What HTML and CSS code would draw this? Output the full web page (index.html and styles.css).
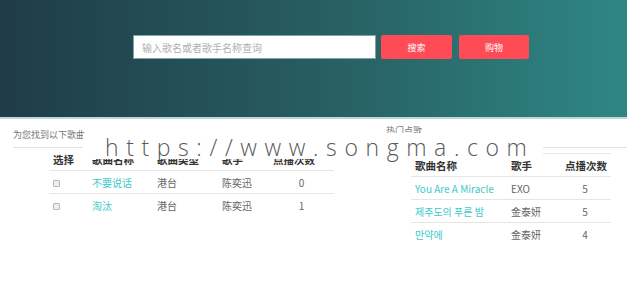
FILE: index.html
```html
<!doctype html>
<html lang="zh-CN">
  <head>
    <meta charset="UTF-8" />
    <meta name="viewport" content="width=device-width, initial-scale=1.0" />
    <title>点歌</title>
    <link rel="stylesheet" href="styles.css">
  </head>
  <body>
    <header class="banner">
      <form class="search-bar" onsubmit="return false">
        <input class="search-input" type="text" placeholder="输入歌名或者歌手名称查询" />
        <button class="btn" type="submit">搜索</button>
        <button class="btn btn-cart" type="button">购物</button>
      </form>
    </header>

    <main class="content">
      <section class="panel panel-result">
        <h2 class="panel-title">为您找到以下歌曲</h2>
        <hr class="panel-rule" />
        <table class="song-table result-table">
          <thead>
            <tr>
              <th class="col-check">选择</th>
              <th class="col-name">歌曲名称</th>
              <th class="col-type">歌曲类型</th>
              <th class="col-singer">歌手</th>
              <th class="col-count">点播次数</th>
            </tr>
          </thead>
          <tbody>
            <tr>
              <td><input class="check" type="checkbox" /></td>
              <td><a href="#">不要说话</a></td>
              <td>港台</td>
              <td>陈奕迅</td>
              <td class="num">0</td>
            </tr>
            <tr>
              <td><input class="check" type="checkbox" /></td>
              <td><a href="#">淘汰</a></td>
              <td>港台</td>
              <td>陈奕迅</td>
              <td class="num">1</td>
            </tr>
          </tbody>
        </table>
      </section>

      <section class="panel panel-hot">
        <h2 class="panel-title">热门点歌</h2>
        <hr class="panel-rule" />
        <table class="song-table hot-table">
          <thead>
            <tr>
              <th class="col-name">歌曲名称</th>
              <th class="col-singer">歌手</th>
              <th class="col-count">点播次数</th>
            </tr>
          </thead>
          <tbody>
            <tr>
              <td><a href="#">You Are A Miracle</a></td>
              <td>EXO</td>
              <td class="num">5</td>
            </tr>
            <tr>
              <td><a href="#">제주도의 푸른 밤</a></td>
              <td>金泰妍</td>
              <td class="num">5</td>
            </tr>
            <tr>
              <td><a href="#">만약에</a></td>
              <td>金泰妍</td>
              <td class="num">4</td>
            </tr>
          </tbody>
        </table>
      </section>

      <div class="watermark">https://www.songma.com</div>
    </main>
  </body>
</html>
```

FILE: styles.css
```css
body {
  margin: 0;
  padding: 0;
  font-family: "Noto Sans CJK SC", "Noto Sans", sans-serif;
  color: #555;
  background: #fff;
  overflow: hidden;
}

.banner {
  height: 117px;
  background: linear-gradient(90deg, #1f3c47 0%, #275d61 50%, #2e8784 100%);
  border-bottom: 2px solid #bcd6da;
  display: flex;
  justify-content: flex-start;
}

.search-bar {
  display: flex;
  margin: 35px 0 0 133px;
  height: 24px;
}

.search-input {
  box-sizing: border-box;
  width: 243px;
  height: 24px;
  border: 1px solid #7fa3a7;
  padding: 0 8px;
  font-family: inherit;
  font-size: 10px;
  color: #555;
  outline: none;
}

.search-input::placeholder {
  color: #b0b0b0;
}

.btn {
  width: 71px;
  height: 24px;
  margin-left: 5px;
  border: none;
  border-radius: 2px;
  background: #ff4b55;
  color: #fff;
  font-family: inherit;
  font-size: 9px;
  cursor: pointer;
}

.btn-cart {
  width: 70px;
  margin-left: 7px;
}

.content {
  position: relative;
  display: flex;
}

.panel-title {
  margin: 0;
  font-size: 9px;
  font-weight: normal;
  color: #777;
  line-height: 12px;
}

.panel-rule {
  border: none;
  border-top: 1px solid #e2e2e2;
  margin: 0;
}

.panel-result {
  width: 340px;
  padding: 10px 0 0 13px;
}

.panel-result .panel-rule {
  margin-top: 6px;
}

.panel-hot {
  flex: 1;
  padding: 6px 0 0 33px;
}

.panel-hot .panel-rule {
  margin-top: 10px;
}

.song-table {
  border-collapse: collapse;
  font-size: 10px;
}

.song-table th {
  text-align: left;
  font-weight: bold;
  color: #333;
  font-size: 10.5px;
  height: 22px;
  padding: 0 4px;
  border-bottom: 1px solid #e6e6e6;
}

.song-table td {
  height: 22px;
  padding: 0 4px;
  border-bottom: 1px solid #e6e6e6;
  color: #666;
}

.song-table tbody tr:last-child td {
  border-bottom: none;
}

.song-table a {
  color: #3cc9c9;
  text-decoration: none;
}

.song-table .num {
  text-align: center;
}

.result-table {
  margin-left: 36px;
  width: 285px;
}

.result-table .col-check { width: 31px; }
.result-table .col-name { width: 57px; }
.result-table .col-type { width: 57px; }
.result-table .col-singer { width: 43px; }

.hot-table {
  margin: 5px 0 0 25px;
  width: 200px;
  border-top: 1px solid #e6e6e6;
}

.hot-table .col-name { width: 88px; }
.hot-table .col-singer { width: 44px; }
.hot-table .col-count { text-align: right; }

.check {
  appearance: none;
  box-sizing: border-box;
  width: 7px;
  height: 7px;
  margin: 0;
  border: 1px solid #b8b8b8;
  border-radius: 1px;
  background: #eee;
  vertical-align: middle;
}

.watermark {
  position: absolute;
  left: 83px;
  top: 14px;
  width: 460px;
  height: 26px;
  padding-left: 22px;
  box-sizing: border-box;
  background: #fff;
  color: #5a5a5a;
  font-family: "Open Sans", "DejaVu Sans", sans-serif;
  font-weight: 300;
  font-size: 23px;
  line-height: 28px;
  letter-spacing: 7.6px;
  white-space: nowrap;
}
```
